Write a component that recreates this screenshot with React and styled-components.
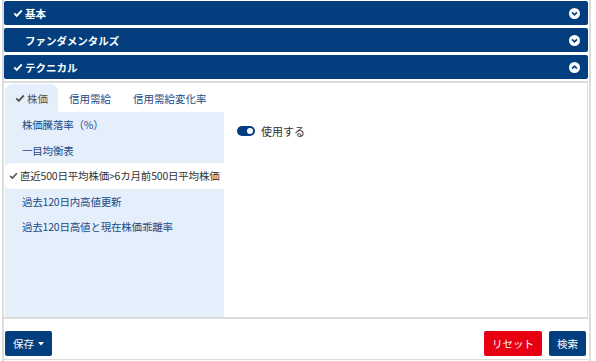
import React, { useState } from 'react';
import styled, { createGlobalStyle } from 'styled-components';

const colors = {
  navy: '#033f7f',
  paleBlue: '#e4effb',
  line: '#dcdcdc',
  link: '#1b4a86',
  text: '#333333',
  red: '#e60012',
};

const GlobalStyle = createGlobalStyle`
  html, body {
    margin: 0;
    padding: 0;
    background: #fff;
  }
  body {
    font-family: "Noto Sans CJK JP", "Noto Sans", sans-serif;
    font-size: 11px;
    color: ${colors.text};
  }
`;

const Frame = styled.div`
  box-sizing: border-box;
  width: 589px;
  height: 361px;
  margin-left: 2px;
  padding: 1px 1px 0 0;
  border-left: 2px solid ${colors.line};
  border-right: 2px solid ${colors.line};
  display: flex;
  flex-direction: column;
`;

const SectionBar = styled.div`
  box-sizing: border-box;
  height: 24px;
  margin-bottom: 3px;
  background: ${colors.navy};
  border-radius: 2px;
  color: #fff;
  display: flex;
  align-items: center;
  padding: 0 8px 0 9px;
  font-size: 10.5px;
  font-weight: 700;

  .title {
    flex: 1;
    display: flex;
    align-items: center;
    gap: 2px;
  }
  .spacer {
    width: 10px;
  }
`;

const Panel = styled.div`
  box-sizing: border-box;
  margin-top: -1px;
  height: 238px;
  border-top: 2px solid ${colors.line};
  border-right: 1px solid ${colors.line};
  border-bottom: 2px solid ${colors.line};
  padding-left: 1px;
  display: flex;
  flex-direction: column;
`;

const TabRow = styled.div`
  display: flex;
  height: 28px;
  padding-top: 1px;
`;

const Tab = styled.div`
  box-sizing: border-box;
  display: flex;
  align-items: center;
  gap: 2px;
  padding: 0 ${p => (p.$active ? '10px' : '11px')};
  border-radius: 8px 8px 0 0;
  background: ${p => (p.$active ? colors.paleBlue : 'transparent')};
  color: ${p => (p.$active ? '#555' : colors.link)};
  font-size: 10.5px;
`;

const Body = styled.div`
  flex: 1;
  display: flex;
`;

const SideList = styled.div`
  width: 219px;
  background: ${colors.paleBlue};
  display: flex;
  flex-direction: column;
`;

const SideItem = styled.div`
  box-sizing: border-box;
  height: 25.5px;
  display: flex;
  align-items: center;
  gap: 2px;
  padding-left: ${p => (p.$active ? '4px' : '17px')};
  border-radius: 6px 0 0 6px;
  background: ${p => (p.$active ? '#fff' : 'transparent')};
  color: ${p => (p.$active ? colors.text : colors.link)};
  font-size: 10.5px;
  white-space: nowrap;
  letter-spacing: -0.2px;
`;

const Content = styled.div`
  flex: 1;
  padding: 11px 0 0 13px;
`;

const ToggleRow = styled.label`
  display: flex;
  align-items: center;
  gap: 6px;
  font-size: 11px;
  color: ${colors.text};
`;

const Switch = styled.span`
  position: relative;
  width: 18px;
  height: 10px;
  border-radius: 5px;
  background: ${colors.navy};

  &::after {
    content: '';
    position: absolute;
    top: 2px;
    left: ${p => (p.$on ? '10px' : '2px')};
    width: 6px;
    height: 6px;
    border-radius: 50%;
    background: #fff;
  }
`;

const Footer = styled.div`
  box-sizing: border-box;
  height: 41px;
  display: flex;
  align-items: flex-end;
  gap: 7px;
  padding: 0 2px 3px 1px;
  border-bottom: 1px solid ${colors.line};
`;

const Button = styled.button`
  box-sizing: border-box;
  height: 25px;
  padding: 0 ${p => p.$pad || 10}px;
  border: none;
  border-radius: 2px;
  background: ${p => (p.$variant === 'danger' ? colors.red : colors.navy)};
  color: #fff;
  font-family: inherit;
  font-size: 10.5px;
  display: flex;
  align-items: center;
  gap: 4px;
`;

const Grow = styled.div`
  flex: 1;
`;

const Check = ({ size = 10, color = 'currentColor' }) => (
  <svg width={size} height={size} viewBox="0 0 16 16">
    <path d="M2 8.5 L6 12.5 L14 4" fill="none" stroke={color} strokeWidth="3" />
  </svg>
);

const CircleChevron = ({ up }) => (
  <svg width="11" height="11" viewBox="0 0 12 12">
    <circle cx="6" cy="6" r="6" fill="#fff" />
    <path
      d={up ? 'M3.3 7.3 L6 4.6 L8.7 7.3' : 'M3.3 4.8 L6 7.5 L8.7 4.8'}
      fill="none"
      stroke={colors.navy}
      strokeWidth="1.8"
    />
  </svg>
);

const Caret = () => (
  <svg width="6" height="4" viewBox="0 0 6 4">
    <path d="M0 0 L6 0 L3 3.5 Z" fill="#fff" />
  </svg>
);

const sections = [
  { label: '基本', checked: true, open: false },
  { label: 'ファンダメンタルズ', checked: false, open: false },
  { label: 'テクニカル', checked: true, open: true },
];

const tabs = ['株価', '信用需給', '信用需給変化率'];

const items = [
  '株価騰落率（%）',
  '一目均衡表',
  '直近500日平均株価>6カ月前500日平均株価',
  '過去120日内高値更新',
  '過去120日高値と現在株価乖離率',
];

export default function App() {
  const [activeTab] = useState(0);
  const [activeItem] = useState(2);
  const [enabled] = useState(true);

  return (
    <>
      <GlobalStyle />
      <Frame>
        {sections.map(s => (
          <SectionBar key={s.label}>
            <div className="title">
              {s.checked ? <Check size={10} color="#fff" /> : <span className="spacer" />}
              <span>{s.label}</span>
            </div>
            <CircleChevron up={s.open} />
          </SectionBar>
        ))}
        <Panel>
          <TabRow>
            {tabs.map((t, i) => (
              <Tab key={t} $active={i === activeTab}>
                {i === activeTab && <Check size={10} color="#555" />}
                {t}
              </Tab>
            ))}
          </TabRow>
          <Body>
            <SideList>
              {items.map((it, i) => (
                <SideItem key={it} $active={i === activeItem}>
                  {i === activeItem && <Check size={9} color="#555" />}
                  {it}
                </SideItem>
              ))}
            </SideList>
            <Content>
              <ToggleRow>
                <Switch $on={enabled} />
                使用する
              </ToggleRow>
            </Content>
          </Body>
        </Panel>
        <Footer>
          <Button $pad={8}>
            保存 <Caret />
          </Button>
          <Grow />
          <Button $variant="danger" $pad={8}>リセット</Button>
          <Button $pad={8}>検索</Button>
        </Footer>
      </Frame>
    </>
  );
}
